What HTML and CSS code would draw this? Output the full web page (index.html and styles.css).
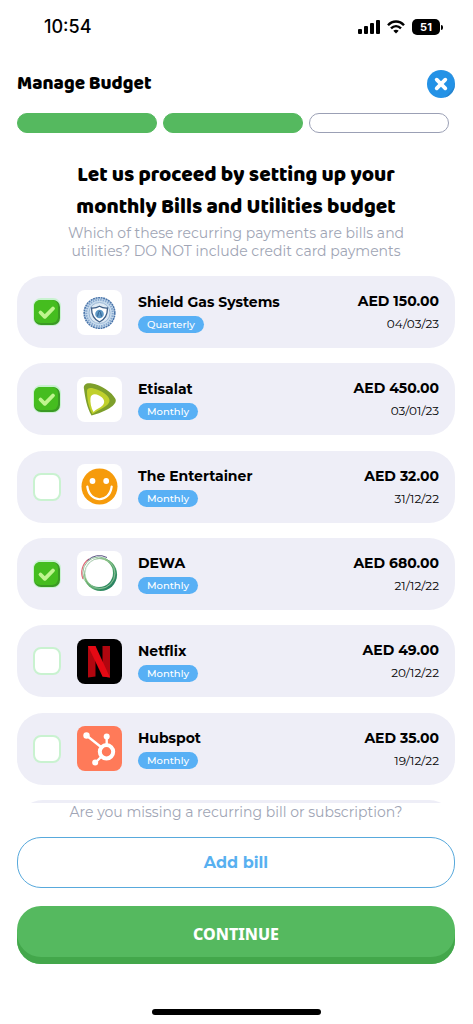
FILE: index.html
```
<!DOCTYPE html>
<html lang="en">
<head>
<meta charset="utf-8">
<meta name="viewport" content="width=device-width, initial-scale=1">
<title>Manage Budget</title>
<link rel="stylesheet" href="styles.css">
</head>
<body>
<div class="screen">
  <div class="status">
    <span class="clock">10:54</span>
    <div class="status-icons">
      <svg width="22" height="14" viewBox="0 0 22 14"><rect x="0" y="9" width="4" height="5" rx="1"/><rect x="6" y="6" width="4" height="8" rx="1"/><rect x="12" y="3" width="4" height="11" rx="1"/><rect x="18" y="0" width="4" height="14" rx="1"/></svg>
      <svg width="18" height="14" viewBox="0 0 18 14" fill="none" stroke="#000" stroke-width="2.4"><path d="M1 5.2C5.5 .2 12.5 .2 17 5.2"/><path d="M4 8.4C7 5.4 11 5.4 14 8.4"/><path d="M6.3 10.8C7.8 9.4 10.2 9.4 11.7 10.8L9 13.600Z" fill="#000" stroke="none"/></svg>
      <span class="battery">51</span>
    </div>
  </div>

  <header class="header">
    <h1 class="title">Manage Budget</h1>
    <button class="close" type="button" aria-label="Close">
      <svg width="28" height="28" viewBox="0 0 28 28"><circle cx="14" cy="14" r="14" fill="#2492e6"/><path d="M18.5 .75A14 14 0 0 1 18 27.400L24 21A12 12 0 0 0 18.500 .75Z" fill="#2884cd"/><path d="M9.700 9.700l8.600 8.600M18.300 9.700l-8.600 8.600" stroke="#fff" stroke-width="3.800" stroke-linecap="round"/></svg>
    </button>
  </header>

  <div class="steps"><span class="step done"></span><span class="step done"></span><span class="step"></span></div>

  <h2 class="heading">Let us proceed by setting up your<br>monthly Bills and Utilities budget</h2>
  <p class="note">Which of these recurring payments are bills and<br>utilities? DO NOT include credit card payments</p>

  <svg class="defs" width="0" height="0" aria-hidden="true">
    <symbol id="tick" viewBox="0 0 28 28"><rect x="1" y="2" width="26" height="25" rx="7" fill="#3b9a24"/><rect x="1" y="2" width="24" height="23" rx="6" fill="#45bd1f"/><path d="M7.500 14.500l4.300 4.300 8.200-8.300" fill="none" stroke="#bff58f" stroke-width="3.800" stroke-linecap="round" stroke-linejoin="round"/></symbol>
  </svg>

  <ul class="list">
    <li class="card">
      <span class="check"><input type="checkbox" id="b1" checked><svg class="tick"><use href="#tick"/></svg></span>
      <svg class="logo" viewBox="0 0 45 45"><rect width="45" height="45" fill="#fff"/><circle cx="22.500" cy="23" r="15.300" fill="#c9dced" stroke="#4b76ab" stroke-width="1.600" stroke-dasharray="2 .6"/><circle cx="22.500" cy="23" r="13.200" fill="none" stroke="#87a8cf" stroke-width="2" stroke-dasharray="1.500 1"/><circle cx="22.500" cy="23" r="10.500" fill="#dfeaf4" stroke="#8fafd0" stroke-width=".8"/><path d="M22.500 16.200c2.500 1.500 5 2 8 1.800 0 7-2.500 11.500-8 14-5.500-2.500-8-7-8-14 3 .2 5.500-.3 8-1.800z" fill="#fff" stroke="#3f5f87" stroke-width="1.300"/><circle cx="22.500" cy="24" r="4.300" fill="#5d98c6"/><path d="M20.500 26.500l1-4 1-1.500 1 1.500 1 4" fill="none" stroke="#315f8d"/></svg>
      <div class="info"><label class="name" for="b1">Shield Gas Systems</label><span class="tag">Quarterly</span></div>
      <div class="cost"><span class="amount">AED 150.00</span><span class="date">04/03/23</span></div>
    </li>
    <li class="card">
      <span class="check"><input type="checkbox" id="b2" checked><svg class="tick"><use href="#tick"/></svg></span>
      <svg class="logo" viewBox="0 0 45 45"><rect width="45" height="45" fill="#fff"/><path d="M7 12C6 7 10 5.500 15 6.500C24 8 35 15 38.500 22C41 28 28 35 14.500 38.500C10 31 8 20 7 12Z" fill="#7d9f2b"/><path d="M10 14C10 10 15 10.500 20 12.500C28 15.500 33 20 32.500 24C32 29 23 32 15.500 37C11 30 10 20 10 14Z" fill="#c0d02c"/><path d="M13.500 21C14 17 18 16.500 22 18.500C27 21 28.500 25 26 28C23.500 31 19 32 16.500 35C14 31 13 25 13.500 21Z" fill="#fff"/></svg>
      <div class="info"><label class="name" for="b2">Etisalat</label><span class="tag">Monthly</span></div>
      <div class="cost"><span class="amount">AED 450.00</span><span class="date">03/01/23</span></div>
    </li>
    <li class="card">
      <span class="check"><input type="checkbox" id="b3"><svg class="tick"><use href="#tick"/></svg></span>
      <svg class="logo" viewBox="0 0 45 45"><rect width="45" height="45" fill="#fff"/><circle cx="22.500" cy="22.500" r="18" fill="#f69b0b"/><circle cx="15.500" cy="17" r="2.900" fill="#fff"/><circle cx="29.200" cy="17" r="2.900" fill="#fff"/><path d="M10.300 22.500C12.500 39.500 32.500 39.500 34.700 22.500" fill="none" stroke="#fff" stroke-width="2.200" stroke-linecap="round"/></svg>
      <div class="info"><label class="name" for="b3">The Entertainer</label><span class="tag">Monthly</span></div>
      <div class="cost"><span class="amount">AED 32.00</span><span class="date">31/12/22</span></div>
    </li>
    <li class="card">
      <span class="check"><input type="checkbox" id="b4" checked><svg class="tick"><use href="#tick"/></svg></span>
      <svg class="logo" viewBox="0 0 45 45"><defs><linearGradient id="ring" x1="0" y1="0" x2="1" y2="1"><stop offset="0" stop-color="#8d9a90"/><stop offset=".35" stop-color="#78b867"/><stop offset=".65" stop-color="#3f9a65"/><stop offset="1" stop-color="#146d5c"/></linearGradient></defs><rect width="45" height="45" fill="#fff"/><circle cx="23.600" cy="23.500" r="16.500" fill="url(#ring)"/><circle cx="22" cy="22" r="14" fill="#fff"/><circle cx="21.800" cy="22" r="16" fill="none" stroke="#6fb27c" stroke-width=".8"/><path d="M6 28A16.500 16.500 0 0 1 12 8" fill="none" stroke="#df6b79" stroke-width="1.200"/><path d="M10.500 9.500A16.500 16.500 0 0 1 30 6.500" fill="none" stroke="#5b5482"/><circle cx="23" cy="22.500" r="15" fill="none" stroke="#a6cfb0" stroke-width=".6"/></svg>
      <div class="info"><label class="name" for="b4">DEWA</label><span class="tag">Monthly</span></div>
      <div class="cost"><span class="amount">AED 680.00</span><span class="date">21/12/22</span></div>
    </li>
    <li class="card">
      <span class="check"><input type="checkbox" id="b5"><svg class="tick"><use href="#tick"/></svg></span>
      <svg class="logo" viewBox="0 0 45 45"><rect width="45" height="45"/><path d="M11 7h7.500v30.500L11 38.500zM25.500 7H33v31.500l-7.500-1z" fill="#b1060f"/><path d="M11 7h7.500L33 38.500l-7.500-1z" fill="#e50914"/></svg>
      <div class="info"><label class="name" for="b5">Netflix</label><span class="tag">Monthly</span></div>
      <div class="cost"><span class="amount">AED 49.00</span><span class="date">20/12/22</span></div>
    </li>
    <li class="card">
      <span class="check"><input type="checkbox" id="b6"><svg class="tick"><use href="#tick"/></svg></span>
      <svg class="logo" viewBox="0 0 45 45"><rect width="45" height="45" fill="#ff7a59"/><g stroke="#fff" fill="none"><path d="M9.500 9.500L24 21M29.700 11v8M24 31l-5.500 5.500" stroke-width="2.400"/><circle cx="29.500" cy="25.800" r="6.700" stroke-width="4"/></g><g fill="#fff"><circle cx="9.500" cy="9.500" r="3.200"/><circle cx="29.700" cy="10.500" r="3"/><circle cx="18.200" cy="36.500" r="3"/></g></svg>
      <div class="info"><label class="name" for="b6">Hubspot</label><span class="tag">Monthly</span></div>
      <div class="cost"><span class="amount">AED 35.00</span><span class="date">19/12/22</span></div>
    </li>
    <li class="peek" aria-hidden="true"><div class="card"></div></li>
  </ul>

  <p class="note">Are you missing a recurring bill or subscription?</p>
  <button class="add" type="button">Add bill</button>
  <button class="continue" type="button">CONTINUE</button>
  <div class="home"></div>
</div>
</body>
</html>
```
FILE: styles.css
```
* { box-sizing: border-box; }
body { margin: 0; background: #fff; color: #000; font-family: Montserrat, Inter, sans-serif; }
h1, h2, p, ul { margin: 0; padding: 0; }
button { font: inherit; cursor: pointer; }

.screen { min-height: 100vh; display: flex; flex-direction: column; padding: 0 18px 9px 17px; }

.status { display: flex; justify-content: space-between; align-items: center; height: 54px; padding: 0 15px 0 27px; }
.clock { font: 500 18px/24px Inter, sans-serif; }
.status-icons { display: flex; align-items: center; gap: 7px; }
.battery { position: relative; width: 28px; height: 16px; border-radius: 5px; background: #000; color: #fff; font: 700 11px/16px Inter, sans-serif; text-align: center; }
.battery::after { content: ""; position: absolute; left: 29px; top: 6px; width: 2px; height: 5px; border-radius: 0 2px 2px 0; background: #000; }

.header { display: flex; justify-content: space-between; align-items: center; margin-top: 16px; }
.title { font: 800 19px/28px "Baloo 2", "Open Sans", sans-serif; }
.close { width: 28px; height: 28px; padding: 0; border: 0; background: none; }
.close svg { display: block; }

.steps { display: flex; gap: 6px; margin-top: 15px; padding-right: 6px; }
.step { flex: 1; height: 20px; border: 1px solid #9ba0b5; border-radius: 10px; }
.step.done { border-color: #55b95f; background: #55b95f; }

.heading { margin-top: 26px; text-align: center; font: 800 21px/32px "Baloo 2", "Open Sans", sans-serif; }
.note { text-align: center; font-size: 14px; line-height: 18px; color: #a0a5b5; }
.heading + .note { margin-top: 1px; }
.defs { position: absolute; }

.list { flex: 1; display: flex; flex-direction: column; justify-content: space-between; margin-top: 16px; list-style: none; }
.card { display: flex; align-items: center; gap: 16px; height: 72px; padding: 0 16px; border-radius: 26px; background: #eeeef7; }
.peek { height: 3px; overflow: hidden; }

.check { display: grid; flex: none; width: 28px; height: 28px; }
.check input, .tick { grid-area: 1 / 1; width: 28px; height: 28px; margin: 0; }
.check input { appearance: none; border: 2px solid #c9f2d0; border-radius: 8px; background: #fff; }
.check input:checked { background: #c3f5c4; }
.tick { visibility: hidden; pointer-events: none; }
.check input:checked + .tick { visibility: visible; }

.logo { flex: none; width: 45px; height: 45px; border-radius: 8px; }
.info { flex: 1; display: flex; flex-direction: column; align-items: flex-start; gap: 4px; }
.name { font-size: 14px; font-weight: 700; line-height: 20px; }
.tag { padding: 0 9px; border-radius: 9px; background: #58b0f5; color: #fff; font-size: 10px; font-weight: 500; line-height: 17px; }
.cost { display: flex; flex-direction: column; align-items: flex-end; gap: 4px; }
.amount { font-size: 14px; font-weight: 700; line-height: 20px; }
.date { font-size: 12px; line-height: 18px; }

.add { height: 51px; margin-top: 16px; border: 1px solid #58a9dc; border-radius: 24px; background: #fff; color: #58b0f0; font-size: 16px; font-weight: 700; }
.continue { height: 58px; margin-top: 18px; padding: 0 0 3px; border: 0; border-radius: 24px; background: #55b95f; box-shadow: inset 0 -7px #43a74b; color: #fff; font: 800 16px/24px "Noto Sans", sans-serif; }
.home { align-self: center; width: 169px; height: 6px; margin-top: 45px; border-radius: 3px; background: #000; }
```
